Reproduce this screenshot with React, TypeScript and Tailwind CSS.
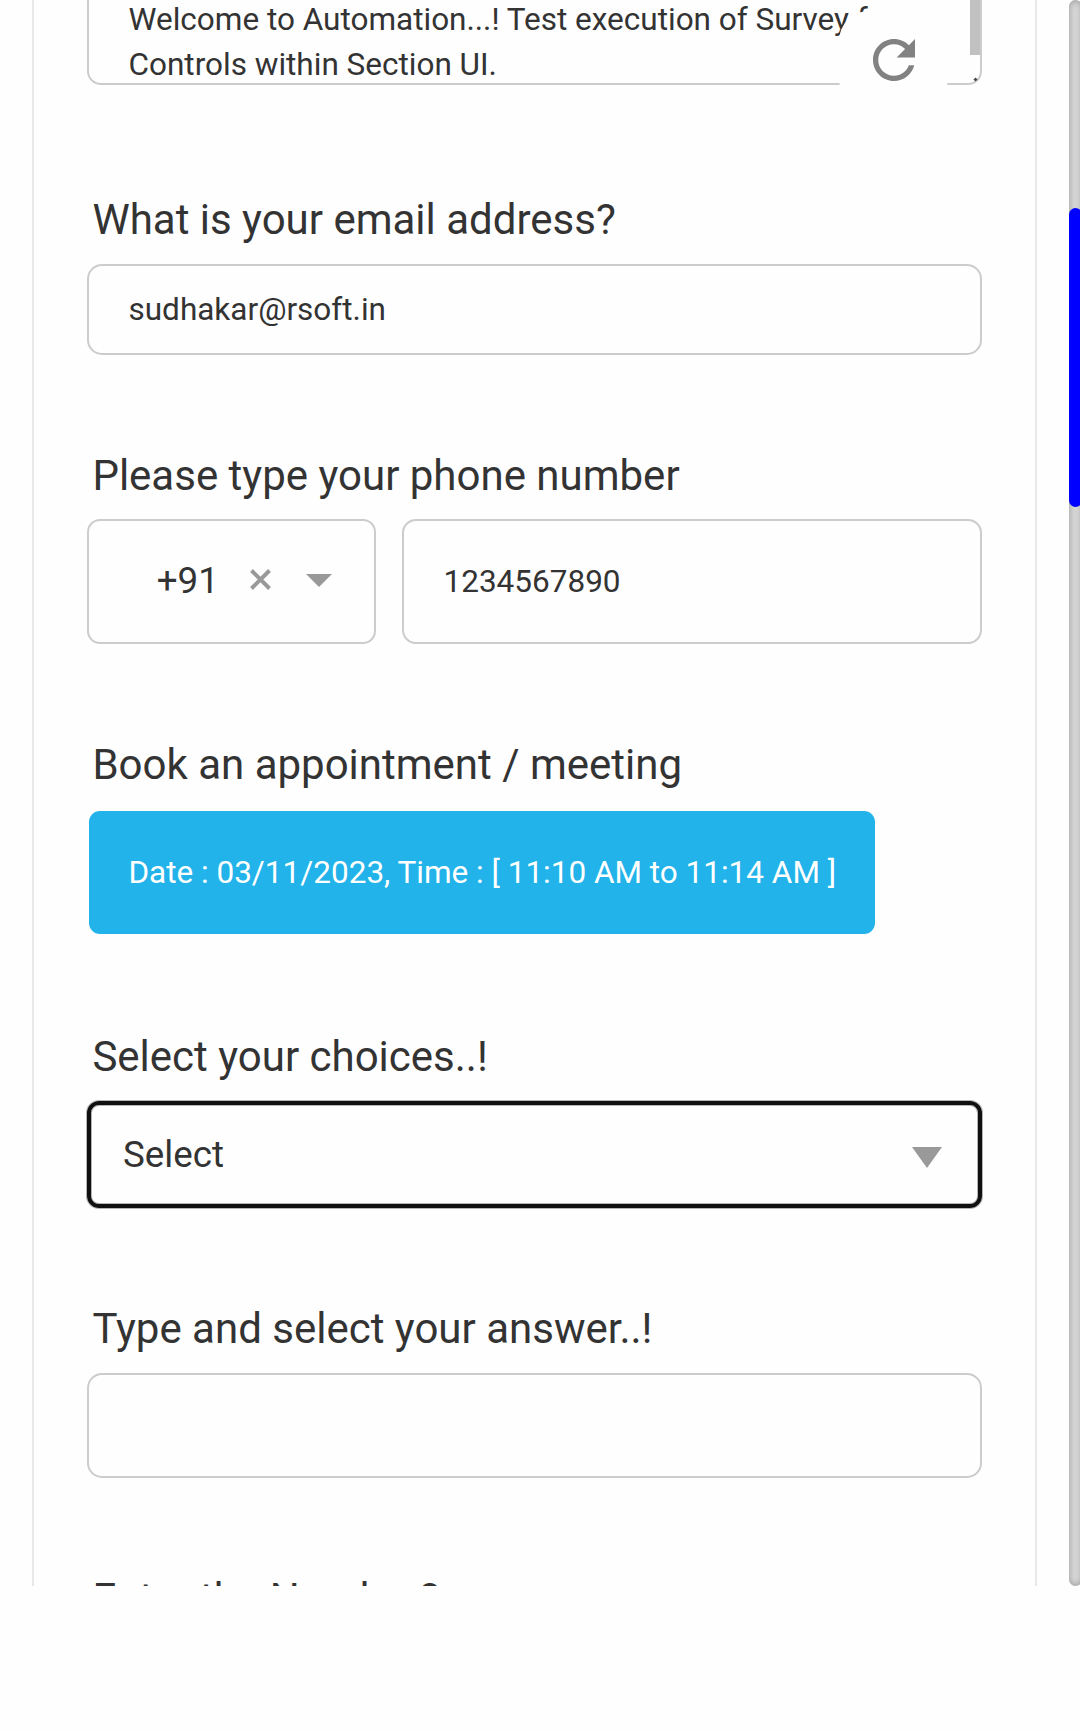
import type { ReactNode } from "react";

function Label({ children }: { children: ReactNode }) {
  return <h2 className="pl-[5.4px] text-[42px] leading-[49px] whitespace-nowrap">{children}</h2>;
}

function MessageArea() {
  return (
    <div className="relative h-[85px] rounded-b-[14px] border-x-2 border-b-2 border-[#cccccc]">
      <div className="h-[83px] overflow-hidden">
        <p className="-mt-[3px] pl-[39.5px] text-[31.5px] leading-[45px] whitespace-nowrap">
          Welcome to Automation...! Test execution of Survey f
          <br />
          Controls within Section UI.
        </p>
      </div>
      <div className="absolute top-0 right-0 h-[55px] w-[10px] bg-[#c1c1c1]" />
      <div className="absolute right-[3px] bottom-[2px] size-[3px] rotate-45 bg-[#4a4a4a]" />
      <button
        aria-label="Refresh"
        className="absolute top-[11px] left-[750px] flex h-[97px] w-[109px] items-center justify-center rounded-[30px] bg-[#fefefe]"
      >
        <svg viewBox="4 4 16 16" className="size-[42px] fill-[#828282]">
          <path d="M17.65 6.35C16.2 4.9 14.21 4 12 4c-4.42 0-7.99 3.58-7.99 8s3.57 8 7.99 8c3.73 0 6.84-2.55 7.73-6h-2.08c-.82 2.33-3.04 4-5.65 4-3.31 0-6-2.69-6-6s2.69-6 6-6c1.66 0 3.14.69 4.22 1.78L13 11h7V4l-2.35 2.35z" />
        </svg>
      </button>
    </div>
  );
}

export default function App() {
  return (
    <div className="h-[1731px] w-[1080px] overflow-hidden bg-[#fefefe] font-[Roboto,sans-serif] text-[#333333]">
      <div className="flex h-[1586px] overflow-hidden">
        <main className="ml-8 h-[1586px] w-[1005px] shrink-0 overflow-hidden border-x-2 border-[#e8e8e8] pr-[53px] pl-[53px]">
          <MessageArea />

          <section className="mt-[110px]">
            <Label>What is your email address?</Label>
            <div className="mt-5 flex h-[91px] items-center rounded-[15px] border-2 border-[#cccccc] pl-[39.5px] text-[31.5px]">
              sudhakar@rsoft.in
            </div>
          </section>

          <section className="mt-24">
            <Label>Please type your phone number</Label>
            <div className="mt-[19px] flex h-[125px] gap-[26px]">
              <div className="flex w-[289px] items-center rounded-[13px] border-2 border-[#cccccc] pl-[67.7px]">
                <span className="mt-[-3px] w-[93.3px] text-[36.75px] leading-[43px]">+91</span>
                <svg viewBox="0 0 21 21" className="mt-[-5px] size-[21px] stroke-[#999999] stroke-[4]">
                  <path d="M1.5 1.5 19.5 19.5M19.5 1.5 1.5 19.5" />
                </svg>
                <svg viewBox="0 0 26 13" className="mt-[-3px] ml-[35px] h-[13px] w-[26px] fill-[#999999]">
                  <path d="M0 0h26L13 13z" />
                </svg>
              </div>
              <div className="flex flex-1 items-center rounded-[14px] border-2 border-[#cccccc] pl-[39.5px] text-[31.5px]">
                1234567890
              </div>
            </div>
          </section>

          <section className="mt-24">
            <Label>Book an appointment / meeting</Label>
            <div className="mt-[22px] ml-[2px] flex h-[123px] w-[786px] items-center rounded-[11px] bg-[#21b3e9] pl-[39.4px] text-[31.5px] whitespace-nowrap text-white">
              Date : 03/11/2023, Time : [ 11:10 AM to 11:14 AM ]
            </div>
          </section>

          <section className="mt-[98px]">
            <Label>Select your choices..!</Label>
            <div className="mt-5 flex h-[107px] items-center justify-between rounded-[12px] border-4 border-[#101010] pr-9 pl-8 shadow-[0_0_0_1px_#b5b5b5,inset_0_0_0_1px_#b5b5b5]">
              <span className="text-[36.75px] leading-[43px]">Select</span>
              <svg viewBox="0 0 30 21" className="mt-[6px] h-[21px] w-[30px] fill-[#999999]">
                <path d="M0 0h30L15 21z" />
              </svg>
            </div>
          </section>

          <section className="mt-24">
            <Label>Type and select your answer..!</Label>
            <div className="mt-5 h-[105px] rounded-[15px] border-2 border-[#cccccc]" />
          </section>

          <section className="mt-24">
            <Label>Enter the Number?</Label>
          </section>
        </main>

        <div className="ml-8 h-[1586px] w-[13px] shrink-0 rounded-[6.5px] bg-[#d8d8d8] pt-[208px] shadow-[inset_0_0_7px_#969696]">
          <div className="h-[299px] rounded-[6.5px] bg-[#0000ff]" />
        </div>
      </div>
    </div>
  );
}
